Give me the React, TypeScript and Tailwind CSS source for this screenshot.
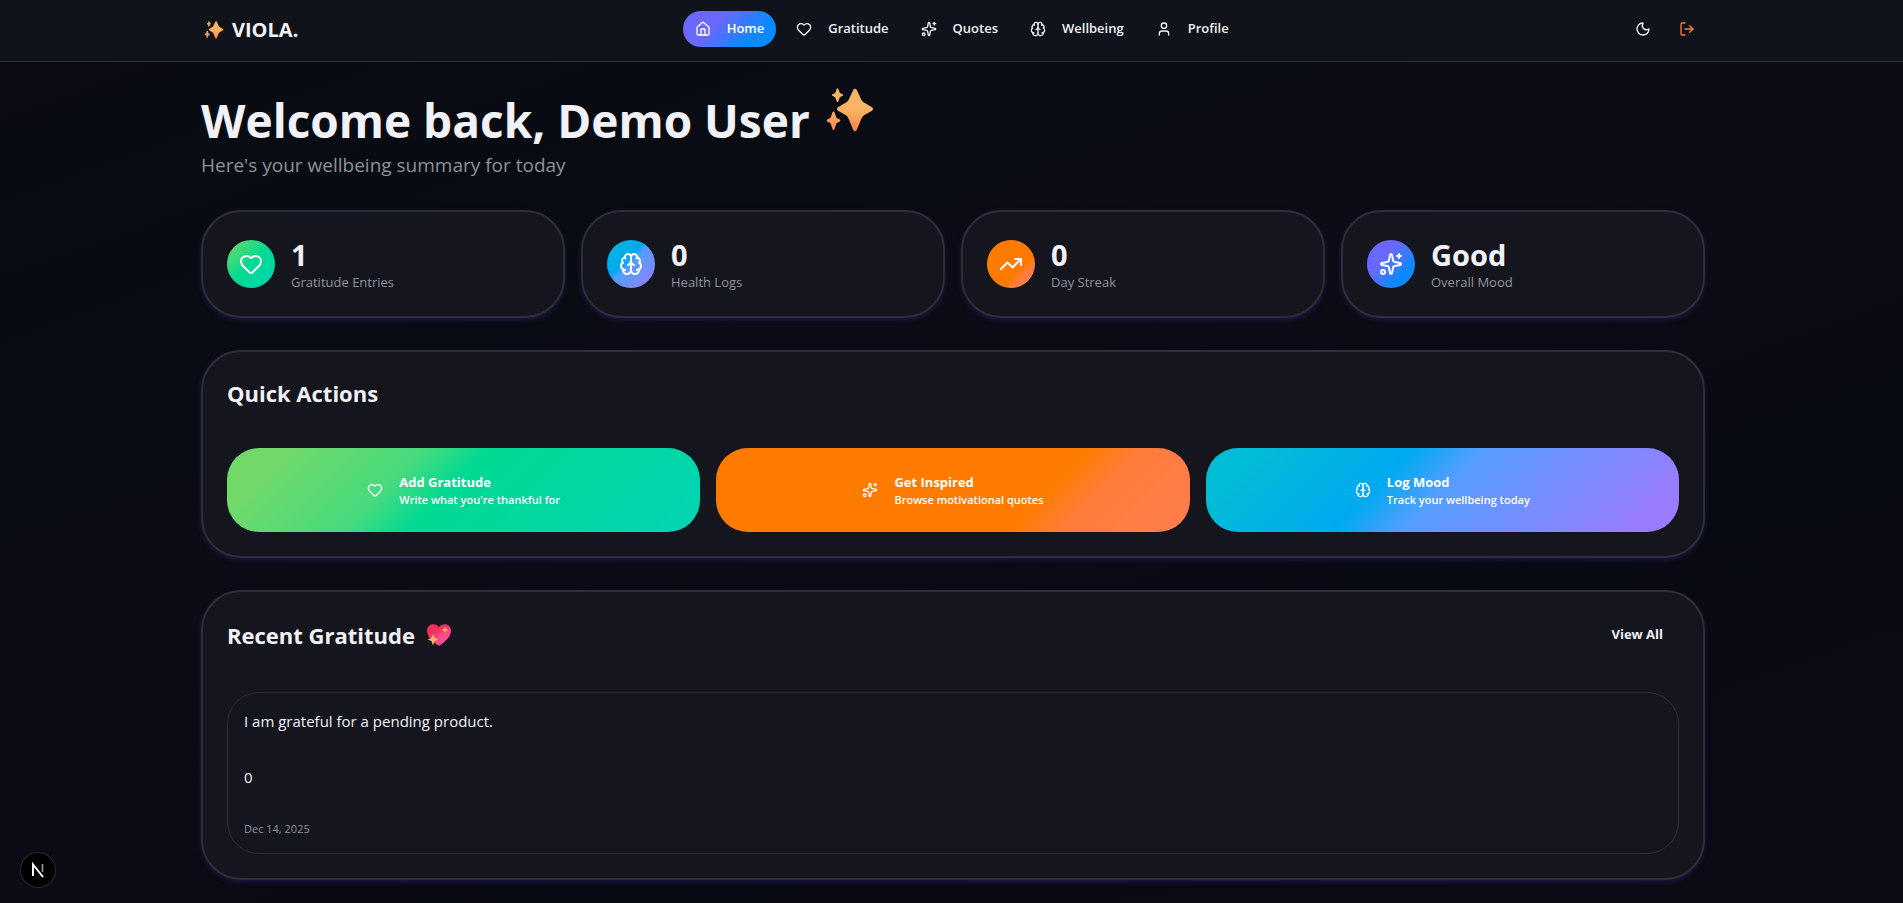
import React from 'react';
import { House, Heart, Sparkles, Brain, User, Moon, LogOut, TrendingUp } from 'lucide-react';
import type { LucideIcon } from 'lucide-react';

function SparkleEmoji({ id, className }: { id: string; className: string }) {
  return (
    <svg viewBox="0 0 48 44" className={className} aria-hidden="true">
      <defs>
        <linearGradient id={id} gradientUnits="userSpaceOnUse" x1="0" y1="0" x2="0" y2="44">
          <stop offset="0.5" stopColor="#f8b463" />
          <stop offset="1" stopColor="#f97f4e" />
        </linearGradient>
      </defs>
      <g fill={`url(#${id})`} stroke={`url(#${id})`} strokeLinejoin="round">
        <path strokeWidth="4" d="M29 2.800L33.500 12.500Q34.500 15 37 16.300L45 21L37 25.500Q34.500 27 33.500 30L29 41L24.500 30Q23.500 27 21 25.500L13 21L21 16.300Q23.500 15 24.500 12.500Z" />
        <path strokeWidth="1.600" d="M11.500 1L13 5Q13.300 5.800 14 6L16.300 7L14 8.200Q13.300 8.500 13 9.200L11.500 13.200L10 9.200Q9.700 8.500 9 8.200L6.700 7L9 6Q9.700 5.800 10 5Z" />
        <path strokeWidth="2" d="M7.500 24.500L9.300 29.500Q9.700 30.700 10.800 31.200L13.300 32.500L10.800 33.800Q9.700 34.300 9.300 35.500L7.500 41L5.700 35.500Q5.300 34.300 4.200 33.800L1.700 32.500L4.200 31.200Q5.300 30.700 5.700 29.500Z" />
      </g>
    </svg>
  );
}

function SparklingHeart() {
  return (
    <svg viewBox="0 0 24 22" className="h-[22px] w-6" aria-hidden="true">
      <defs>
        <linearGradient id="heart-fill" x1="0.2" y1="0" x2="0.7" y2="1">
          <stop offset="0.3" stopColor="#ef2f5d" />
          <stop offset="0.6" stopColor="#ff4a8b" />
        </linearGradient>
      </defs>
      <path fill="url(#heart-fill)" d="M12 3.200C13.500 1.200 15.500.300 17.700.300c3.600 0 6.200 2.700 6.200 6.400 0 6-5.500 10.500-10.800 14.500-.700.500-1.500.500-2.200 0C5.600 17.200.100 12.700.100 6.700.100 3 2.700.300 6.300.300 8.500.300 10.500 1.200 12 3.200z" />
      <path fill="#fcb45c" d="M18 2.500l1 2.400L21.500 6l-2.500 1L18 9.500l-1-2.500L14.500 6l2.500-1.100z" />
      <path fill="#fcb45c" d="M6 10l1.600 3.900L11.500 15.500l-3.900 1.600L6 21.500l-1.600-4.400L.5 15.500l3.900-1.600z" />
    </svg>
  );
}

const navItems: { label: string; icon: LucideIcon }[] = [
  { label: 'Home', icon: House },
  { label: 'Gratitude', icon: Heart },
  { label: 'Quotes', icon: Sparkles },
  { label: 'Wellbeing', icon: Brain },
  { label: 'Profile', icon: User },
];

const stats: { value: string; label: string; icon: LucideIcon; fill: string }[] = [
  { value: '1', label: 'Gratitude Entries', icon: Heart, fill: 'bg-[linear-gradient(135deg,#78d968,#00d991_50%,#00d5b4)]' },
  { value: '0', label: 'Health Logs', icon: Brain, fill: 'bg-[linear-gradient(135deg,#00bcd4,#00a9f0_40%,#559dff_50%,#9b7cff)]' },
  { value: '0', label: 'Day Streak', icon: TrendingUp, fill: 'bg-[linear-gradient(135deg,#ff7b00_65%,#ff7c40_75%,#ff7d50)]' },
  { value: 'Good', label: 'Overall Mood', icon: Sparkles, fill: 'bg-[linear-gradient(135deg,#6a68ff_35%,#0a8aff_75%)]' },
];

const actions: { title: string; text: string; icon: LucideIcon; fill: string }[] = [
  { title: 'Add Gratitude', text: "Write what you're thankful for", icon: Heart, fill: 'bg-[linear-gradient(135deg,#72d968_10%,#46da7e_36%,#00d991_47%,#00d5b4)]' },
  { title: 'Get Inspired', text: 'Browse motivational quotes', icon: Sparkles, fill: 'bg-[linear-gradient(135deg,#ff7b00_67%,#ff7c38_76%,#ff7d50)]' },
  { title: 'Log Mood', text: 'Track your wellbeing today', icon: Brain, fill: 'bg-[linear-gradient(135deg,#00bcd4_10%,#00a9f0_38%,#559dff_50%,#9b7cff_92%)]' },
];

const card = 'rounded-[40px] border-2 border-[#2e2e3a] bg-[#15151e] p-6 shadow-[0_2px_5px_rgba(64,48,160,0.35)]';

export default function App() {
  return (
    <div className="min-h-screen bg-[linear-gradient(160deg,#0a0a14,#080c12_20%,#0c0c16_45%,#080a12_70%,#0b0b16)] font-['Open_Sans','Noto_Sans',sans-serif] text-[#f1f1f8]">
      <header className="border-b border-[#2d3039] bg-[#10131a] pb-[3px] pl-[3px]">
        <div className="mx-auto flex h-[58px] max-w-[1536px] items-center justify-between px-4">
          <a href="#" className="flex items-center gap-2 pt-0.5 pl-[3px]">
            <SparkleEmoji id="logo-spark" className="h-[18px] w-5" />
            <span className="text-xl leading-7 font-bold">VIOLA.</span>
          </a>
          <nav className="flex items-center gap-2">
            {navItems.map(({ label, icon: Icon }, i) => (
              <a
                key={label}
                href="#"
                className={`flex h-9 items-center gap-4 rounded-[18px] px-3 text-[13px] font-semibold ${i === 0 ? 'bg-[linear-gradient(135deg,#6a68ff_35%,#0a8aff_75%)] text-white' : ''}`}
              >
                <Icon className="size-4" />
                {label}
              </a>
            ))}
          </nav>
          <div className="flex items-center gap-2">
            <button aria-label="Toggle theme" className="flex size-9 items-center justify-center">
              <Moon className="size-4" />
            </button>
            <button aria-label="Sign out" className="flex size-9 items-center justify-center text-[#f97c3c]">
              <LogOut className="size-4" />
            </button>
          </div>
        </div>
      </header>

      <main className="pb-[23px] pl-[3px]">
        <div className="mx-auto max-w-[1536px] px-4">
          <div className="flex h-[116px] flex-col justify-end">
            <h1 className="flex items-start gap-4 text-[46px] leading-[64px] font-bold">
              Welcome back, Demo User
              <SparkleEmoji id="title-spark" className="h-11 w-12" />
            </h1>
            <p className="text-[19px] leading-[26px] text-[#8f919d]">Here's your wellbeing summary for today</p>
          </div>

          <section className="mt-8 grid grid-cols-4 gap-4">
            {stats.map(({ value, label, icon: Icon, fill }) => (
              <div key={label} className={`${card} flex items-center gap-4`}>
                <div className={`flex size-12 items-center justify-center rounded-full text-white ${fill}`}>
                  <Icon className="size-6" />
                </div>
                <div className="h-14">
                  <p className="text-[29px] leading-[38px] font-bold">{value}</p>
                  <p className="text-[13px] leading-4 text-[#8f919d]">{label}</p>
                </div>
              </div>
            ))}
          </section>

          <section className={`${card} mt-8`}>
            <h2 className="text-[22px] leading-[34px] font-bold">Quick Actions</h2>
            <div className="mt-[38px] grid grid-cols-3 gap-4">
              {actions.map(({ title, text, icon: Icon, fill }) => (
                <button key={title} className={`flex h-[84px] items-center justify-center gap-4 rounded-[32px] text-left text-white ${fill}`}>
                  <Icon className="size-4" />
                  <span>
                    <span className="block text-[13px] leading-5 font-bold">{title}</span>
                    <span className="block text-[11px] leading-4 font-semibold">{text}</span>
                  </span>
                </button>
              ))}
            </div>
          </section>

          <section className={`${card} mt-8`}>
            <div className="flex h-[38px] items-center justify-between">
              <h2 className="flex items-center gap-3 text-[22px] leading-[34px] font-bold">
                Recent Gratitude
                <SparklingHeart />
              </h2>
              <button className="h-9 px-4 text-[13px] font-bold">View All</button>
            </div>
            <article className="mt-[38px] rounded-[32px] border border-[#2e2e3a] p-4">
              <p className="text-[15px] leading-6">I am grateful for a pending product.</p>
              <p className="mt-8 text-[15px] leading-6">0</p>
              <p className="mt-8 text-[11px] leading-4 text-[#8f919d]">Dec 14, 2025</p>
            </article>
          </section>
        </div>
      </main>

      <button aria-label="Open developer tools" className="fixed bottom-4 left-[21px] flex size-[34px] items-center justify-center rounded-full bg-black ring-1 ring-[#2b2b31]">
        <svg viewBox="0 0 14 16" className="h-4 w-3.5" fill="none" aria-hidden="true">
          <path d="M2 14V2.500L12 15" stroke="#fff" strokeWidth="2" />
          <path d="M11.500 2v8" stroke="#999" strokeWidth="1.600" />
        </svg>
      </button>
    </div>
  );
}
